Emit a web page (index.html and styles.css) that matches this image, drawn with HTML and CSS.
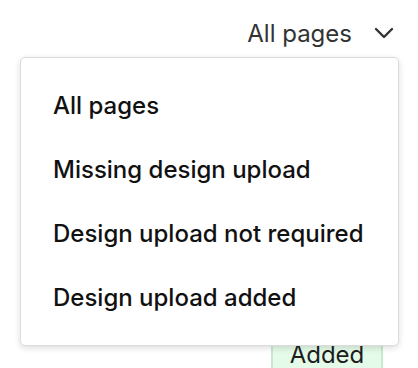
FILE: index.html
```html
<!DOCTYPE html>
<html>
<head>
<meta charset="utf-8">
<link rel="stylesheet" href="styles.css">
</head>
<body>
<div class="page">
  <div class="trigger">
    <span class="trigger-label">All pages</span>
    <svg class="chevron" width="20" height="12" viewBox="0 0 20 12"><path d="M2 2 L10 10 L18 2" fill="none" stroke="#333" stroke-width="2.4" stroke-linecap="round" stroke-linejoin="round"/></svg>
  </div>
  <div class="content">
    <span class="badge">Added</span>
  </div>
  <ul class="menu">
    <li class="item">All pages</li>
    <li class="item">Missing design upload</li>
    <li class="item">Design upload not required</li>
    <li class="item">Design upload added</li>
  </ul>
</div>
</body>
</html>
```
FILE: styles.css
```css
html, body { margin: 0; padding: 0; background: #fff; }
.page {
  position: relative;
  width: 418px;
  height: 368px;
  overflow: hidden;
  font-family: Inter, "Noto Sans", sans-serif;
}
.trigger {
  display: flex;
  justify-content: flex-end;
  align-items: center;
  gap: 22px;
  padding: 17px 24px 0 0;
  height: 32px;
  color: #333;
  font-size: 24px;
}
.chevron { display: block; }
.content {
  display: flex;
  justify-content: flex-end;
  padding: 290px 35px 0 0;
}
.badge {
  display: block;
  width: 94px;
  padding: 1px 7px;
  line-height: 30px;
  text-align: center;
  background: #e4fbe9;
  border-left: 2px solid #c8e8cf;
  border-right: 2px solid #c8e8cf;
  font-size: 24px;
  color: #1e1e1e;
}
.menu {
  position: absolute;
  left: 20px;
  top: 57px;
  width: 377px;
  height: 256px;
  margin: 0;
  padding: 15px 0 16px;
  list-style: none;
  background: #fff;
  border: 1px solid #dcdcdc;
  border-radius: 5px;
  box-shadow: 0 2px 6px rgba(0,0,0,0.14);
}
.item {
  display: flex;
  align-items: center;
  height: 64px;
  padding: 0 32px;
  font-size: 24px;
  font-weight: 500;
  color: #111;
}
```
